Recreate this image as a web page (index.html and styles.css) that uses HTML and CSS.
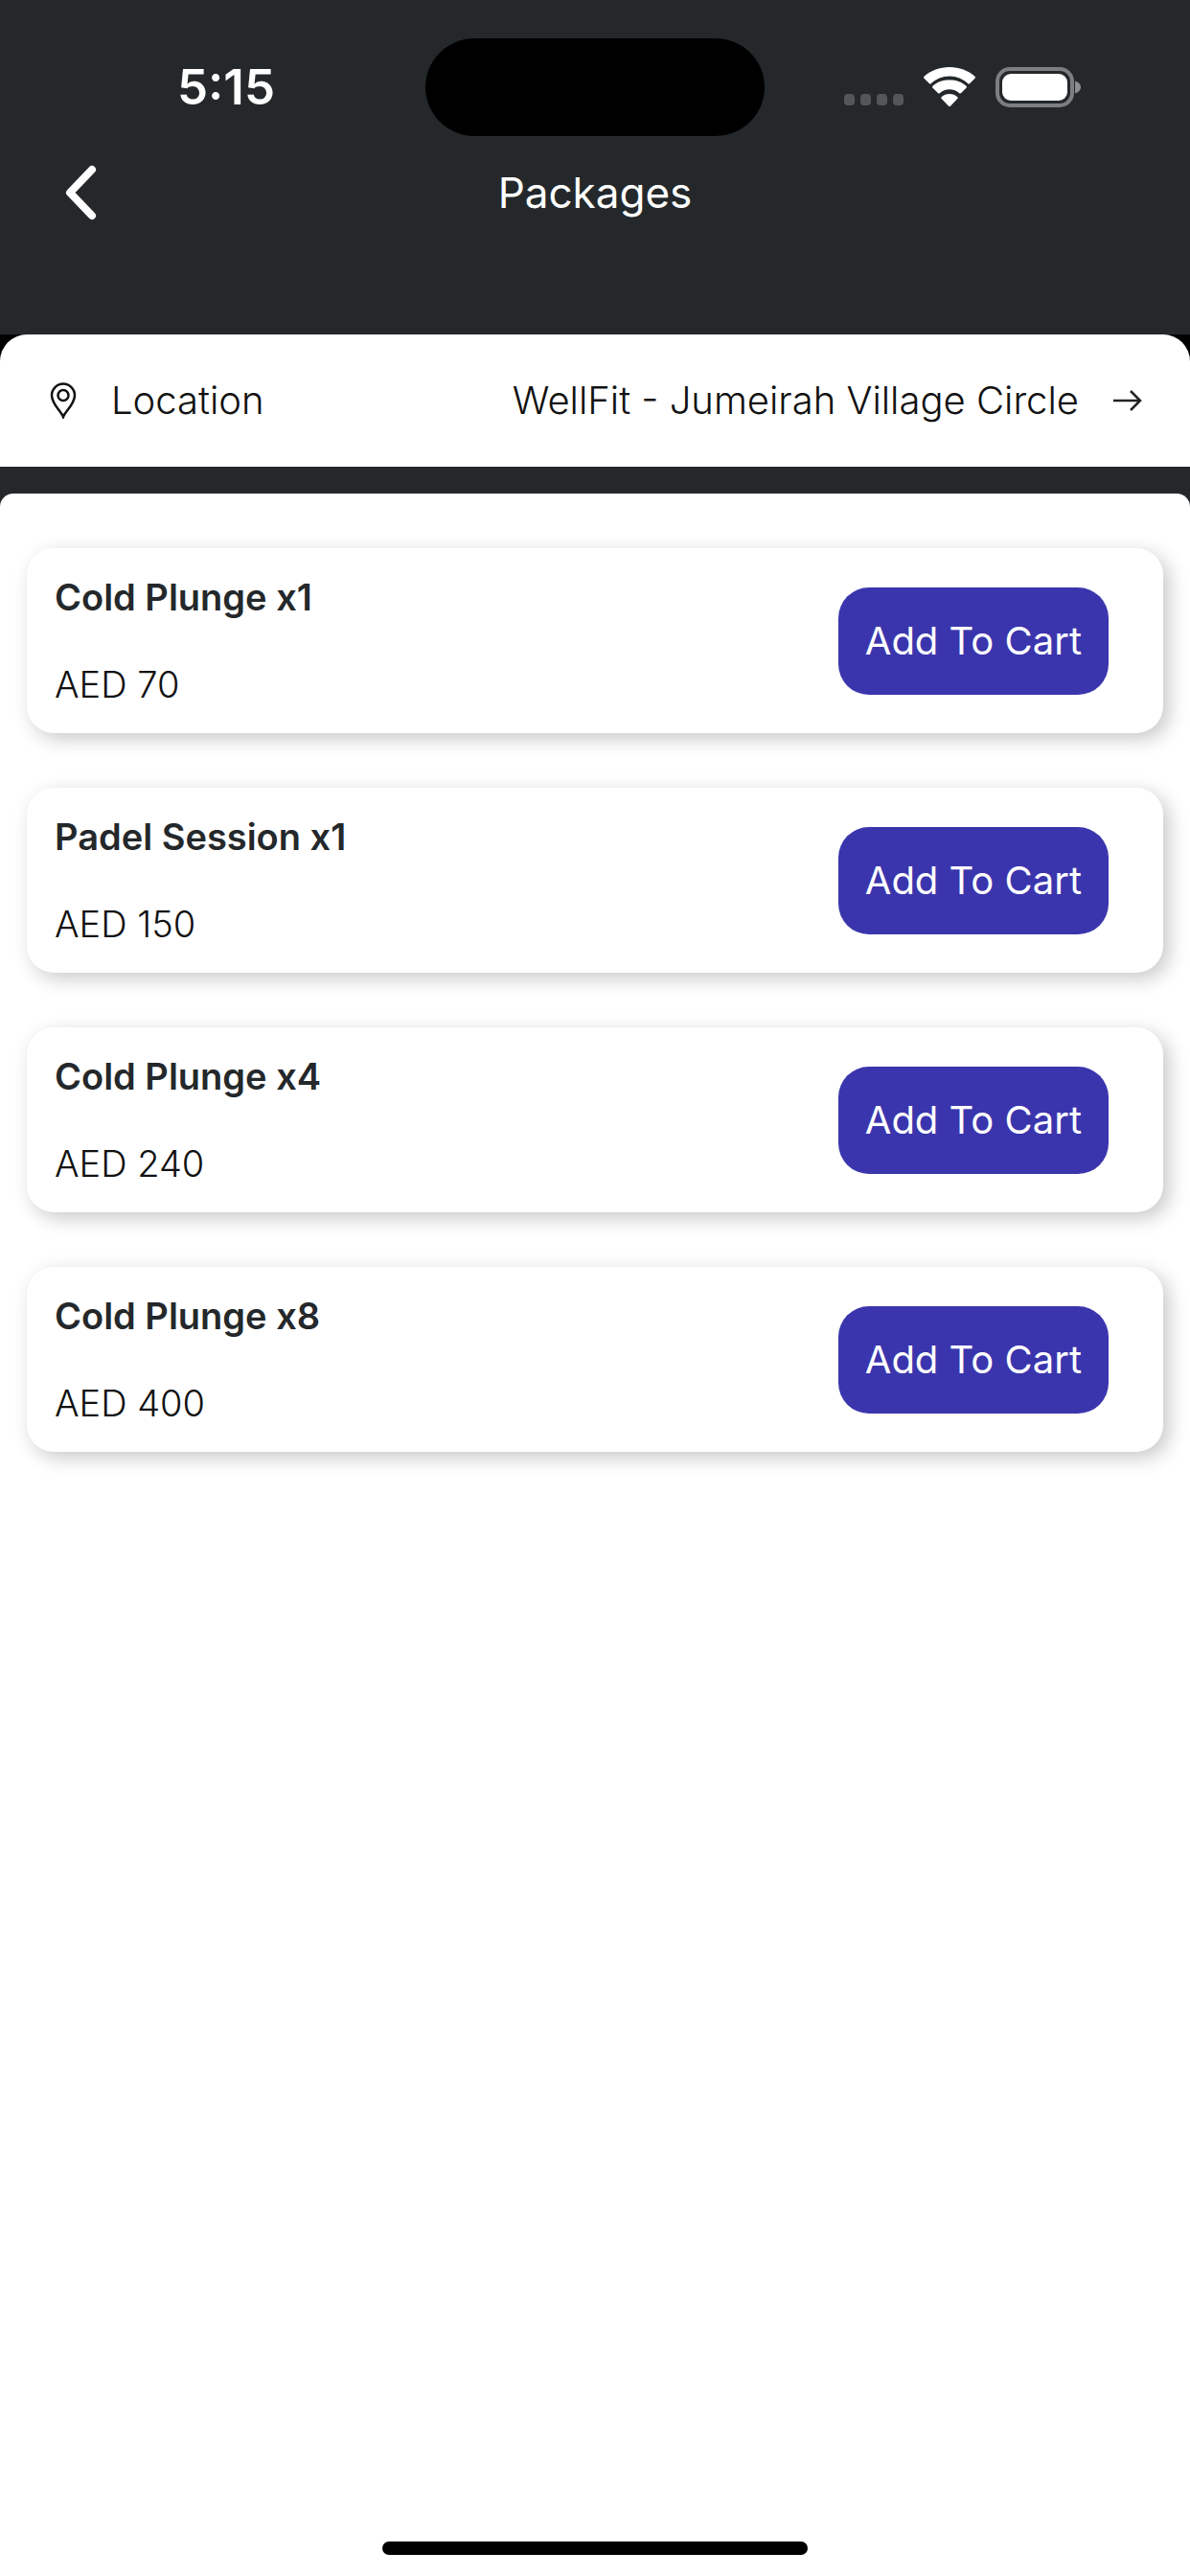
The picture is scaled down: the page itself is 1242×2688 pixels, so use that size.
FILE: index.html
```html
<!DOCTYPE html>
<html lang="en">
<head>
    <meta charset="UTF-8">
    <meta name="viewport" content="width=device-width, initial-scale=1.0">
    <title>Packages</title>
    <link rel="stylesheet" href="styles.css">
</head>
<body>
    <header class="header">
        <div class="status-bar">
            <div class="time">5:15</div>
            <div class="island"></div>
            <div class="status-icons">
                <svg class="signal" width="62" height="14" viewBox="0 0 62 14" fill="#55565a" aria-hidden="true">
                    <rect x="0" y="0" width="11" height="12" rx="4"/>
                    <rect x="17" y="0" width="11" height="12" rx="4"/>
                    <rect x="34" y="0" width="11" height="12" rx="4"/>
                    <rect x="51" y="0" width="11" height="12" rx="4"/>
                </svg>
                <svg class="wifi" width="56" height="42" viewBox="0 0 56 42" fill="#fff" aria-hidden="true">
                    <path d="M28 9.5c7.400 0 14.200 2.900 19.300 7.700.5.500 1.200.500 1.700 0l5.500-5.400c.6-.6.6-1.400 0-2C47.500 3.500 38.200 0 28 0S8.500 3.500 1.500 9.800c-.6.600-.6 1.400 0 2L7 17.200c.5.500 1.200.5 1.700 0C13.800 12.400 20.600 9.500 28 9.500z"/>
                    <path d="M28 23.300c3.900 0 7.500 1.500 10.200 3.900.5.500 1.200.5 1.700 0l5.600-5.400c.6-.6.6-1.400 0-2C40.900 15.500 34.700 13.600 28 13.600s-12.900 1.900-17.500 6.200c-.6.600-.6 1.400 0 2l5.600 5.400c.5.500 1.200.5 1.700 0 2.700-2.400 6.300-3.900 10.200-3.900z"/>
                    <path d="M36.300 31.200c.6.600.6 1.300 0 1.900l-7.400 7.600c-.5.500-1.300.5-1.800 0l-7.400-7.600c-.6-.6-.6-1.300 0-1.900 2.300-2.300 5.200-3.300 8.300-3.300s6 1 8.300 3.300z"/>
                </svg>
                <svg class="battery" width="90" height="42" viewBox="0 0 90 42" aria-hidden="true">
                    <rect x="2" y="2" width="78" height="38" rx="13" fill="none" stroke="#7d7e80" stroke-width="4"/>
                    <rect x="7" y="7" width="68" height="28" rx="9" fill="#fff"/>
                    <path d="M83 14.500c3.600 1.200 6 3.600 6 6.500s-2.400 5.300-6 6.500z" fill="#8d8e90"/>
                </svg>
            </div>
        </div>
        <div class="nav">
            <button class="back" aria-label="Back">
                <svg width="34" height="58" viewBox="0 0 34 58" fill="none" stroke="#fff" stroke-width="8" stroke-linecap="round" stroke-linejoin="round">
                    <path d="M28 5L5 29l23 24"/>
                </svg>
            </button>
            <h1>Packages</h1>
        </div>
    </header>

    <div class="location-wrap">
        <button class="location">
            <svg class="pin" width="28" height="38" viewBox="0 0 28 38" fill="none" stroke="#111" stroke-width="2.500" aria-hidden="true">
                <path d="M14 36C12 30 2 23 2 13.500a12 12 0 0 1 24 0C26 23 16 30 14 36z"/>
                <circle cx="14" cy="13.500" r="5.500"/>
            </svg>
            <span>Location</span>
            <span class="place">WellFit - Jumeirah Village Circle</span>
            <svg width="30" height="24" viewBox="0 0 30 24" fill="none" stroke="#222" stroke-width="2.500" aria-hidden="true">
                <path d="M0 12h28M18 2l10 10-10 10"/>
            </svg>
        </button>
    </div>

    <main class="packages">
        <ul>
            <li class="card">
                <div class="info">
                    <h2>Cold Plunge x1</h2>
                    <p>AED 70</p>
                </div>
                <button class="add">Add To Cart</button>
            </li>
            <li class="card">
                <div class="info">
                    <h2>Padel Session x1</h2>
                    <p>AED 150</p>
                </div>
                <button class="add">Add To Cart</button>
            </li>
            <li class="card">
                <div class="info">
                    <h2>Cold Plunge x4</h2>
                    <p>AED 240</p>
                </div>
                <button class="add">Add To Cart</button>
            </li>
            <li class="card">
                <div class="info">
                    <h2>Cold Plunge x8</h2>
                    <p>AED 400</p>
                </div>
                <button class="add">Add To Cart</button>
            </li>
        </ul>
        <div class="home-indicator"></div>
    </main>
</body>
</html>
```
FILE: styles.css
```css
* {
    box-sizing: border-box;
}
body {
    margin: 0;
    min-height: 100vh;
    display: flex;
    flex-direction: column;
    background: #24282b;
    font-family: Inter, sans-serif;
    font-size: 40px;
    font-weight: 300;
    line-height: 48px;
    color: #111;
}
h1, h2, p, ul {
    margin: 0;
    padding: 0;
}
button {
    border: none;
    font: inherit;
    color: inherit;
    cursor: pointer;
}
svg {
    display: block;
    flex: none;
}

/* Status bar and title */
.header {
    padding-bottom: 119px;
    color: #fff;
}
.status-bar {
    display: grid;
    grid-template-columns: 1fr 354px 1fr;
    align-items: center;
    padding-top: 40px;
}
.time {
    padding-left: 28px;
    font-size: 51px;
    font-weight: 600;
    text-align: center;
}
.island {
    height: 102px;
    border-radius: 51px;
    background: #000;
}
.status-icons {
    display: flex;
    justify-content: flex-end;
    align-items: flex-end;
    gap: 20px;
    padding-right: 113px;
}
.nav {
    display: grid;
    grid-template-columns: 1fr auto 1fr;
    align-items: center;
    padding: 30px 68px 0;
}
.back {
    justify-self: start;
    padding: 0;
    background: none;
}
h1 {
    font-size: 44px;
    font-weight: 400;
}

/* Location row */
.location-wrap {
    background: #000;
}
.location {
    display: flex;
    align-items: center;
    width: 100%;
    padding: 45px 50px;
    border-radius: 28px 28px 0 0;
    background: #fff;
}
.pin {
    margin: 0 36px 0 2px;
}
.place {
    margin: 0 36px 0 auto;
}

/* Package list */
.packages {
    flex: 1;
    display: flex;
    flex-direction: column;
    margin-top: 28px;
    padding: 57px 28px 22px;
    border-radius: 14px 14px 0 0;
    background: #fff;
}
ul {
    display: grid;
    gap: 57px;
    list-style: none;
}
.card {
    display: flex;
    justify-content: space-between;
    align-items: center;
    padding: 27px 57px 27px 29px;
    border-radius: 28px;
    background: #fff;
    box-shadow: 6px 6px 20px rgba(0, 0, 0, 0.22);
}
.info {
    display: grid;
    gap: 43px;
    font-size: 38px;
}
h2 {
    font-size: 38px;
    font-weight: 600;
    color: #24282b;
}
.add {
    padding: 32px 28px;
    border-radius: 32px;
    background: #3b35ad;
    color: #fff;
    font-weight: 400;
}
.home-indicator {
    width: 444px;
    height: 14px;
    margin: auto auto 0;
    border-radius: 7px;
    background: #000;
}
```
